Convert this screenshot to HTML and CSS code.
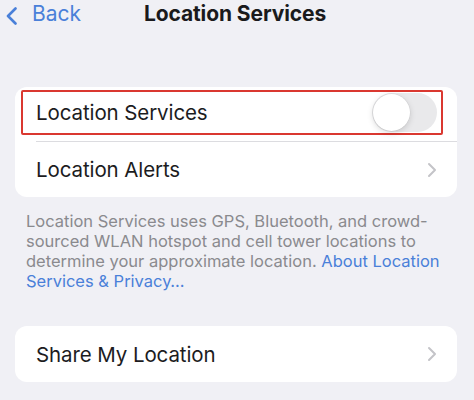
FILE: index.html
```html
<!DOCTYPE html>
<html lang="en">
<head>
<meta charset="utf-8">
<title>Location Services</title>
<link rel="stylesheet" href="styles.css">
</head>
<body>
  <header class="nav">
    <a class="nav-back" href="#">
      <svg class="nav-back-icon" viewBox="0 0 13 18" width="13" height="18" aria-hidden="true">
        <path d="M10.5 1.5 L3 9 L10.5 16.5" fill="none" stroke="currentColor" stroke-width="2.6" stroke-linecap="round" stroke-linejoin="round"/>
      </svg>
      <span>Back</span>
    </a>
    <h1 class="nav-title">Location Services</h1>
    <span></span>
  </header>

  <main class="content">
    <section class="group">
      <div class="row row-toggle">
        <div class="highlight">
          <span class="row-label">Location Services</span>
          <span class="switch" role="switch" aria-checked="false"><span class="switch-knob"></span></span>
        </div>
      </div>
      <div class="row row-link">
        <span class="row-label">Location Alerts</span>
        <svg class="chevron" viewBox="0 0 10 16" width="10" height="16" aria-hidden="true">
          <path d="M2 2 L8 8 L2 14" fill="none" stroke="currentColor" stroke-width="2" stroke-linecap="round" stroke-linejoin="round"/>
        </svg>
      </div>
    </section>

    <p class="footnote">Location Services uses GPS, Bluetooth, and crowd-sourced WLAN hotspot and cell tower locations to determine your approximate location. <a href="#">About Location Services &amp; Privacy…</a></p>

    <section class="group group-share">
      <div class="row row-link row-single">
        <span class="row-label">Share My Location</span>
        <svg class="chevron" viewBox="0 0 10 16" width="10" height="16" aria-hidden="true">
          <path d="M2 2 L8 8 L2 14" fill="none" stroke="currentColor" stroke-width="2" stroke-linecap="round" stroke-linejoin="round"/>
        </svg>
      </div>
    </section>
  </main>
</body>
</html>
```

FILE: styles.css
```css
* {
  box-sizing: border-box;
}

html, body {
  margin: 0;
  padding: 0;
}

body {
  background: #f0f0f5;
  font-family: Inter, "Liberation Sans", Arial, sans-serif;
  color: #1c1c1e;
  width: 474px;
  height: 400px;
  overflow: hidden;
}

/* Navigation bar */
.nav {
  display: grid;
  grid-template-columns: 1fr auto 1fr;
  align-items: center;
  height: 28px;
}

.nav-back {
  display: flex;
  align-items: center;
  gap: 14px;
  padding-left: 5px;
  color: #4a80d9;
  text-decoration: none;
  font-size: 21px;
  line-height: 24px;
}

.nav-back-icon {
  display: block;
  margin-top: 3px;
}

.nav-title {
  margin: 0 0 0 -4px;
  font-size: 21px;
  font-weight: 700;
  line-height: 24px;
  letter-spacing: -0.1px;
  color: #1a1a1c;
}

/* Content */
.content {
  padding: 59px 17px 0 15px;
}

.group {
  background: #ffffff;
  border-radius: 12px;
  overflow: hidden;
}

.row {
  display: flex;
  align-items: center;
  height: 55px;
}

.row-label {
  font-size: 20.5px;
  letter-spacing: -0.1px;
  color: #1c1c1e;
}

.row-toggle {
  align-items: stretch;
  position: relative;
}

.row-toggle::after {
  content: "";
  position: absolute;
  left: 21px;
  right: 0;
  bottom: 0;
  height: 1px;
  background: #dcdce0;
}

.highlight {
  flex: 1;
  display: flex;
  align-items: center;
  justify-content: space-between;
  margin: 3px 14px 7px 6px;
  padding: 0 4px 0 13px;
  border: 2px solid #da3830;
  border-radius: 2px;
}

/* Switch in the off state */
.switch {
  position: relative;
  width: 65px;
  height: 39px;
  border-radius: 20px;
  background: #e9e9eb;
}

.switch-knob {
  position: absolute;
  top: 1px;
  left: 1px;
  width: 37px;
  height: 37px;
  border-radius: 50%;
  background: #ffffff;
  box-shadow: 0 2px 6px rgba(0, 0, 0, 0.15), 0 0 0 0.5px rgba(0, 0, 0, 0.06);
}

.row-link {
  justify-content: space-between;
  padding: 0 20px 0 21px;
}

.chevron {
  display: block;
  color: #c4c4c8;
}

.row-single {
  height: 56px;
}

.footnote {
  margin: 14px 6px 0 11px;
  font-size: 16.5px;
  line-height: 20px;
  color: #8a8a8e;
}

.footnote a {
  color: #4a80d9;
  text-decoration: none;
}

.group-share {
  margin-top: 35px;
}
```
